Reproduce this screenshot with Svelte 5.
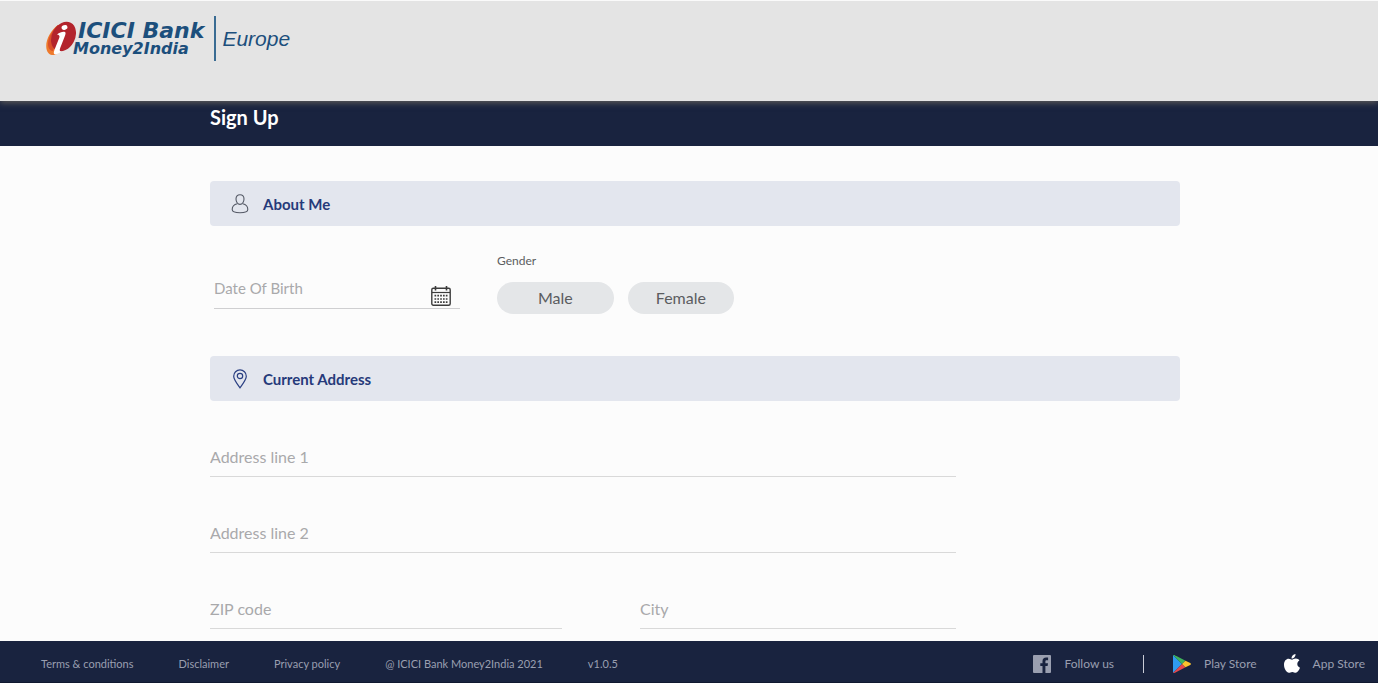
<script>
  const links = ['Terms & conditions', 'Disclaimer', 'Privacy policy'];
  const genders = ['Male', 'Female'];

  let gender = '';
  let form = { dob: '', line1: '', line2: '', zip: '', city: '' };
</script>

<div class="page">
  <header class="header">
    <a class="logo" href="/" aria-label="ICICI Bank Money2India Europe">
      <svg class="emblem" viewBox="0 0 30 36" width="30" height="36" aria-hidden="true">
        <path d="M12 4C4 10-1 20 .5 28c1 6 7 8 12 4l8-26z" fill="#ee7a2c" />
        <path d="M12 4C6 9 2 17 2 23c0 4 2 7 5 7l8-24z" fill="#d9502a" />
        <ellipse cx="17.500" cy="15.500" rx="11.500" ry="15.500" transform="rotate(28 17.500 15.500)" fill="#b3242c" />
        <ellipse cx="18.500" cy="6.500" rx="3" ry="2.300" transform="rotate(-20 18.500 6.500)" fill="#fff" />
        <path d="M11 13.500c3-2.500 6-3.300 8-2.600 1.200.5.3 3-.5 5.100l-4.300 11c-1 2.800-.2 3.500 1 3.300-2 2.200-5.200 4-6.700 3-1.500-1-.2-4 .8-6.500l4-10c.8-2.300-.5-3-2.300-3.300z" fill="#fff" />
      </svg>
      <span class="wordmark">
        <span class="bank">ICICI Bank</span>
        <span class="product">Money2India</span>
      </span>
      <span class="region">Europe</span>
    </a>
  </header>

  <div class="title-bar">
    <div class="container">
      <h1>Sign Up</h1>
    </div>
  </div>

  <main>
    <form class="container" on:submit|preventDefault>
      <h2 class="section">
        <svg viewBox="0 0 20 20" width="20" height="20" fill="none" stroke="#555a66" stroke-width="1.1" aria-hidden="true">
          <path d="M10 .8c2.600 0 4 1.700 4 4.300S12.400 10.400 10 10.400 6 7.700 6 5.100 7.400.8 10 .8z" />
          <path d="M7.300 9.800C4 10.500 2.200 12.600 2.200 15.600c0 2 2.800 3.200 7.800 3.200s7.800-1.200 7.800-3.200c0-3-1.800-5.100-5.100-5.800" />
        </svg>
        About Me
      </h2>

      <div class="about">
        <div class="dob">
          <input type="text" placeholder="Date Of Birth" aria-label="Date Of Birth" bind:value={form.dob} />
          <button type="button" class="calendar" aria-label="Choose date">
            <svg viewBox="0 0 20 20" width="20" height="20" fill="none" stroke="#3c3c3c" aria-hidden="true">
              <rect x=".8" y="2.200" width="18.400" height="17" rx="1.500" stroke-width="1.400" />
              <path d="M1 6.500h18" stroke-width="1.200" />
              <path d="M4.500 0v4.500M15.500 0v4.500" stroke-width="1.600" />
              <path d="M3.500 9.700h13M3.500 13h13M3.500 16.200h13" stroke-width="1.700" stroke-dasharray="1.700 1.130" />
            </svg>
          </button>
        </div>
        <div class="gender" role="group" aria-labelledby="gender-label">
          <span id="gender-label">Gender</span>
          <div class="pills">
            {#each genders as g}
              <button type="button" class:selected={gender === g} on:click={() => (gender = g)}>{g}</button>
            {/each}
          </div>
        </div>
      </div>

      <h2 class="section">
        <svg viewBox="0 0 20 20" width="20" height="20" fill="none" stroke="#2a3f82" stroke-width="1.200" aria-hidden="true">
          <path d="M10 18.800C6.200 13.600 3.700 10.400 3.700 7.200a6.300 6.300 0 0 1 12.600 0c0 3.200-2.500 6.400-6.300 11.600z" />
          <circle cx="10" cy="7" r="2.700" />
        </svg>
        Current Address
      </h2>

      <div class="address">
        <input type="text" placeholder="Address line 1" aria-label="Address line 1" bind:value={form.line1} />
        <input type="text" placeholder="Address line 2" aria-label="Address line 2" bind:value={form.line2} />
        <div class="split">
          <input type="text" placeholder="ZIP code" aria-label="ZIP code" bind:value={form.zip} />
          <input type="text" placeholder="City" aria-label="City" bind:value={form.city} />
        </div>
      </div>
    </form>
  </main>

  <footer>
    <nav>
      {#each links as link}
        <a href="/">{link}</a>
      {/each}
      <span>@ ICICI Bank Money2India 2021</span>
      <span>v1.0.5</span>
    </nav>
    <div class="social">
      <a href="/">
        <svg viewBox="0 0 18 18" width="18" height="18" aria-hidden="true">
          <rect width="18" height="18" rx="1" fill="#9a9fb0" />
          <path d="M9.500 18v-7H7.300V8.200h2.200V6.300c0-2.500 1.400-3.700 3.600-3.700h2v2.600h-1.400c-1 0-1.300.5-1.300 1.300v1.700H15l-.4 2.800h-2.200v7z" fill="#19233f" />
        </svg>
        Follow us
      </a>
      <span class="divider"></span>
      <a href="/">
        <svg viewBox="0 0 18 18" width="18" height="18" aria-hidden="true">
          <path d="M0 0v18l9-9z" fill="#2f9bf0" />
          <path d="M0 0l9 9 3.500-3.200L2 .2C1.200-.2.500-.2 0 0z" fill="#3fb35b" />
          <path d="M0 18l9-9 3.500 3.200L2 17.800c-.8.4-1.500.4-2 .2z" fill="#e5484c" />
          <path d="M12.500 5.800L9 9l3.500 3.200 4.700-2.300c1-.5 1-1.300 0-1.800z" fill="#fbc22d" />
        </svg>
        Play Store
      </a>
      <a href="/">
        <svg viewBox="0 0 16 19" width="16" height="19" aria-hidden="true">
          <path d="M11.500 0c.2 2.400-1.700 4.500-3.900 4.500C7.300 2.300 9.300.2 11.500 0zM8 5.700c.8 0 2-1.100 3.900-1.100 1.400 0 2.700.7 3.500 1.900-3.100 1.900-2.600 6 .6 7.200-.8 2.300-2.500 5-4.300 5-1.300 0-1.800-.8-3.400-.8s-2.100.8-3.400.8C2.700 18.700 0 14.600 0 10.700c0-3.700 2.200-6 4.600-6C6.200 4.700 7.200 5.700 8 5.700z" fill="#fff" />
        </svg>
        App Store
      </a>
    </div>
  </footer>
</div>

<style>
  :global(*, *::before, *::after) { box-sizing: border-box; }
  :global(body) {
    margin: 0;
    background: #fcfcfc;
    color: #5b5c60;
    font-family: Lato, 'Open Sans', sans-serif;
  }

  .page {
    min-height: 100vh;
    display: flex;
    flex-direction: column;
  }

  .container {
    width: 100%;
    max-width: 982px;
    margin: 0 auto;
    padding-left: 12px;
  }

  .header {
    position: relative;
    z-index: 1;
    height: 101px;
    padding: 15px 46px;
    background: #e4e4e4;
    border-top: 1px solid #fafafa;
    box-shadow: 0 2px 6px #5c5a58;
  }

  .logo {
    display: inline-flex;
    align-items: center;
    color: #1c4f7c;
    text-decoration: none;
    font-style: italic;
    white-space: nowrap;
  }

  .wordmark {
    display: flex;
    flex-direction: column;
    padding: 0 10px 0 2px;
    font-family: 'DejaVu Sans', sans-serif;
    font-weight: 700;
  }

  .bank {
    font-size: 22px;
    line-height: 20px;
  }

  .product {
    font-size: 16px;
    line-height: 16px;
    margin-left: -5px;
  }

  .region {
    padding-left: 6px;
    border-left: 2px solid #3a6c93;
    font-family: 'Liberation Sans', Arial, sans-serif;
    font-size: 21px;
    line-height: 45px;
  }

  .title-bar {
    height: 45px;
    background: #19233f;
  }

  h1 {
    margin: 0;
    color: #fff;
    font-size: 20px;
    line-height: 32px;
    font-weight: 700;
  }

  main {
    flex: 1;
    padding: 35px 0 12px;
  }

  .section {
    display: flex;
    align-items: center;
    gap: 13px;
    height: 45px;
    margin: 0;
    padding-left: 20px;
    border-radius: 4px;
    background: #e3e6ee;
    color: #263a7a;
    font-size: 15px;
    font-weight: 700;
  }

  input {
    display: block;
    width: 100%;
    height: 40px;
    padding: 0;
    border: 0;
    border-bottom: 1px solid #d9d9d9;
    background: none;
    color: #444;
    font: inherit;
    font-size: 16px;
    outline: none;
  }

  input::placeholder {
    color: #a9a9ab;
    opacity: 1;
  }

  button {
    border: 0;
    cursor: pointer;
    font: inherit;
  }

  .about {
    display: flex;
    align-items: flex-start;
    gap: 37px;
    padding: 28px 0 42px 4px;
  }

  .dob {
    display: flex;
    width: 246px;
    margin-top: 14px;
    border-bottom: 1px solid #cfcfd1;
  }

  .dob input {
    flex: 1;
    min-width: 0;
    border: 0;
    font-size: 15px;
  }

  .calendar {
    display: flex;
    align-items: flex-end;
    padding: 0 9px 2px;
    background: none;
  }

  .gender {
    font-size: 12px;
    line-height: 14px;
  }

  .pills {
    display: flex;
    gap: 14px;
    margin-top: 14px;
  }

  .pills button {
    height: 32px;
    padding: 0 28px;
    border-radius: 16px;
    background: #e4e6e8;
    color: #5b5c60;
    font-size: 16px;
  }

  .pills button:first-child {
    padding: 0 41px;
  }

  .pills .selected {
    background: #263a7a;
    color: #fff;
  }

  .address {
    display: flex;
    flex-direction: column;
    gap: 36px;
    max-width: 746px;
    padding-top: 36px;
  }

  .split {
    display: grid;
    grid-template-columns: 352fr 316fr;
    gap: 78px;
  }

  footer {
    display: flex;
    align-items: center;
    justify-content: space-between;
    height: 42px;
    padding: 4px 13px 0 41px;
    background: #19233f;
    border-bottom: 1px solid #101830;
    color: #9a9fb0;
    font-size: 12px;
  }

  footer a {
    color: inherit;
    text-decoration: none;
  }

  nav {
    display: flex;
    gap: 45px;
    font-size: 11px;
  }

  .social {
    display: flex;
    align-items: center;
    gap: 27px;
  }

  .social a {
    display: flex;
    align-items: center;
    gap: 13px;
  }

  .divider {
    width: 1px;
    height: 18px;
    margin: 0 2px;
    background: #c9ccd6;
  }
</style>
